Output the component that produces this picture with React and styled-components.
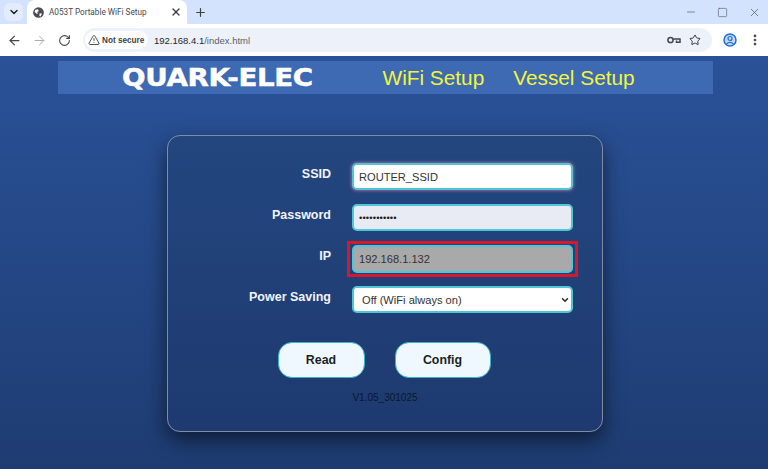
import styled, { createGlobalStyle } from "styled-components"
import { ArrowLeft, ArrowRight, RotateCw, Plus, X, ChevronDown, Minus, Square, Star, TriangleAlert, EllipsisVertical } from "lucide-react"

const GlobalStyle = createGlobalStyle`
    html, body {
        margin: 0;
        padding: 0;
        height: 469px;
        overflow: hidden;
        font-family: "Liberation Sans", Arial, sans-serif;
    }
`

const App = () => {
    return (
        <Page>
            <GlobalStyle />
            <TabStrip>
                <TabMenu><ChevronDown size={12} strokeWidth={3} /></TabMenu>
                <Tab>
                    <svg width="11" height="11" viewBox="0 0 14 14">
                        <circle cx="7" cy="7" r="6.8" fill="#4a4d52" />
                        <path d="M3 3.5 L6 3 L7.5 5 L5.5 6.5 L6 8.5 L4.5 8.5 L2 6 Z M8.5 8 L11.5 8.5 L9.5 12 L8 11 Z" fill="#fff" />
                    </svg>
                    <TabTitle>A053T Portable WiFi Setup</TabTitle>
                    <X size={12} strokeWidth={2.6} color="#33373c" />
                </Tab>
                <NewTab><Plus size={13} strokeWidth={2.2} /></NewTab>
                <WindowControls>
                    <Minus size={12} strokeWidth={1.4} />
                    <Square size={11} strokeWidth={1.4} />
                    <X size={13} strokeWidth={1.4} />
                </WindowControls>
            </TabStrip>
            <Toolbar>
                <NavIcon><ArrowLeft size={15} /></NavIcon>
                <NavIcon $dim><ArrowRight size={15} strokeWidth={1.5} /></NavIcon>
                <NavIcon><RotateCw size={13} /></NavIcon>
                <Omnibox>
                    <SecurityChip>
                        <TriangleAlert size={12} strokeWidth={1.8} />
                        Not secure
                    </SecurityChip>
                    <Url>192.168.4.1<span>/index.html</span></Url>
                    <OmniIcons>
                        <svg width="14" height="10" viewBox="0 0 14 10" fill="none" stroke="#44484d" strokeWidth="1.5">
                            <circle cx="3.5" cy="5" r="2.6" />
                            <path d="M6.2 4H13V7.2H9.5V5.5" />
                        </svg>
                        <Star size={12} strokeWidth={2} color="#33373c" />
                    </OmniIcons>
                </Omnibox>
                <ProfileIcon>
                    <svg width="14" height="14" viewBox="0 0 14 14">
                        <circle cx="7" cy="7" r="6" fill="#c2d7f8" stroke="#1f6fd8" strokeWidth="1.5" />
                        <circle cx="7" cy="5.5" r="2" fill="none" stroke="#1f6fd8" strokeWidth="1.2" />
                        <path d="M3.6 11 Q7 7.8 10.4 11" fill="none" stroke="#1f6fd8" strokeWidth="1.2" />
                    </svg>
                </ProfileIcon>
                <MenuIcon><EllipsisVertical size={14} strokeWidth={2.6} /></MenuIcon>
            </Toolbar>
            <Content>
                <Header>
                    <Logo>QUARK-ELEC</Logo>
                    <HeaderLink $first>WiFi Setup</HeaderLink>
                    <HeaderLink>Vessel Setup</HeaderLink>
                </Header>
                <Card>
                    <Row>
                        <Label>SSID</Label>
                        <Field $bg="#ffffff" $glow>ROUTER_SSID</Field>
                    </Row>
                    <Row>
                        <Label>Password</Label>
                        <Field $bg="#e8ebf3"><Dots>•••••••••••</Dots></Field>
                    </Row>
                    <Row>
                        <Label>IP</Label>
                        <Highlight>
                            <Field $bg="#a9a9a9">192.168.1.132</Field>
                        </Highlight>
                    </Row>
                    <Row>
                        <Label>Power Saving</Label>
                        <Field $bg="#ffffff" $select>
                            Off (WiFi always on)
                            <ChevronDown size={10} strokeWidth={3.4} />
                        </Field>
                    </Row>
                    <Buttons>
                        <Button $w={87}>Read</Button>
                        <Button $w={96}>Config</Button>
                    </Buttons>
                    <Version>V1.05_301025</Version>
                </Card>
            </Content>
        </Page>
    )
}

const Page = styled.div`
    width: 768px;
    height: 469px;
    display: flex;
    flex-direction: column;
    overflow: hidden;
`
const TabStrip = styled.div`
    height: 24px;
    background-color: #d3e3fd;
    display: flex;
    align-items: center;
    padding-left: 4px;
    color: #3c4043;
`
const TabMenu = styled.div`
    width: 19px;
    height: 18px;
    border-radius: 6px;
    background-color: #e3ecfc;
    display: flex;
    align-items: center;
    justify-content: center;
    margin-right: 4px;
    color: #1f2328;
`
const Tab = styled.div`
    width: 160px;
    height: 24px;
    box-sizing: border-box;
    background-color: #fff;
    border-radius: 8px 8px 0 0;
    display: flex;
    align-items: center;
    padding: 0 5px 0 6px;
    gap: 5px;
`
const TabTitle = styled.span`
    flex: 1;
    font-family: Roboto, sans-serif;
    font-size: 8.2px;
    color: #45484d;
    white-space: nowrap;
`
const NewTab = styled.div`
    display: flex;
    margin-left: 7px;
    color: #3c4043;
`
const WindowControls = styled.div`
    margin-left: auto;
    padding-right: 7px;
    display: flex;
    gap: 20px;
    align-items: center;
    color: #5a6068;
`
const Toolbar = styled.div`
    height: 32px;
    background-color: #fff;
    display: flex;
    align-items: center;
    padding-left: 7px;
    box-sizing: border-box;
`
const NavIcon = styled.div`
    width: 15px;
    margin-right: 10px;
    display: flex;
    justify-content: center;
    color: ${(props) => (props.$dim ? "#a4a8ad" : "#44484d")};
`
const Omnibox = styled.div`
    width: 629px;
    margin-left: 1px;
    height: 24px;
    box-sizing: border-box;
    background-color: #edf2fa;
    border-radius: 12px;
    display: flex;
    align-items: center;
    padding: 0 11px 0 2px;
`
const SecurityChip = styled.div`
    height: 18px;
    width: 63px;
    box-sizing: border-box;
    padding-left: 3px;
    background-color: #fff;
    border-radius: 9px;
    display: flex;
    align-items: center;
    gap: 2px;
    font-size: 8.2px;
    font-weight: 700;
    color: #3d4146;
    white-space: nowrap;
`
const Url = styled.span`
    margin-left: 6px;
    font-size: 9.5px;
    color: #24272b;
    span { color: #5c6066; }
`
const OmniIcons = styled.div`
    margin-left: auto;
    display: flex;
    align-items: center;
    gap: 8px;
`
const ProfileIcon = styled.div`
    display: flex;
    margin-left: 11px;
`
const MenuIcon = styled.div`
    display: flex;
    margin-left: 11px;
    color: #44484d;
`
const Content = styled.div`
    flex: 1;
    background: linear-gradient(#2a5298 0%, #1e3c72 100%);
    display: flex;
    flex-direction: column;
    align-items: center;
    padding-top: 5px;
`
const Header = styled.div`
    width: 655px;
    height: 33px;
    background-color: #3e6ab3;
    display: flex;
    align-items: center;
    margin-left: 2px;
    padding-left: 64px;
    box-sizing: border-box;
`
const Logo = styled.div`
    width: 190px;
    font-family: "DejaVu Sans", sans-serif;
    font-weight: 700;
    font-size: 24.5px;
    letter-spacing: -0.3px;
    color: #fff;
    -webkit-text-stroke: 0.5px #fff;
    white-space: nowrap;
    transform: scaleX(1.13);
    transform-origin: left center;
`
const HeaderLink = styled.div`
    margin-left: ${(props) => (props.$first ? "71px" : "29px")};
    font-size: 20.8px;
    color: #f2f53a;
    white-space: nowrap;
`
const Card = styled.div`
    width: 436px;
    height: 297px;
    box-sizing: border-box;
    margin-top: 41px;
    margin-left: 2px;
    padding-top: 27px;
    border: 1px solid #7f8ca5;
    border-radius: 13px;
    background: linear-gradient(#23467f, #1e3a70);
    box-shadow: 0 8px 20px rgba(0, 0, 0, 0.55);
    display: flex;
    flex-direction: column;
    gap: 14px;
`
const Row = styled.div`
    display: flex;
    align-items: center;
    height: 27px;
`
const Label = styled.div`
    width: 163px;
    flex: none;
    margin-bottom: 5px;
    text-align: right;
    font-size: 12.5px;
    font-weight: 700;
    color: #f1f3f7;
    white-space: nowrap;
`
const Field = styled.div`
    width: 221px;
    height: 27px;
    flex: none;
    margin-left: 21px;
    box-sizing: border-box;
    background-color: ${(props) => props.$bg};
    border: 2px solid #4fc6d6;
    border-radius: 5px;
    padding: 0 1px 0 ${(props) => (props.$select ? "8px" : "5px")};
    font-size: 11.1px;
    color: #333;
    display: flex;
    align-items: center;
    justify-content: space-between;
    box-shadow: ${(props) => (props.$glow ? "0 0 3px 1px rgba(190, 120, 170, 0.7)" : "none")};
    svg { color: #222; }
`
const Highlight = styled.div`
    flex: none;
    margin-left: 16px;
    padding: 1px 2px;
    border: 3px solid #d3182f;
    display: flex;
    ${Field} { margin-left: 0; height: 28px; }
`
const Dots = styled.span`
    font-size: 9.5px;
    letter-spacing: 0.1px;
    color: #222;
`
const Buttons = styled.div`
    display: flex;
    justify-content: center;
    gap: 30px;
    margin-top: 15px;
    padding-right: 2px;
`
const Button = styled.button`
    width: ${(props) => props.$w}px;
    height: 36px;
    border: 1px solid #39b4cc;
    border-radius: 14px;
    background-color: #f0f8ff;
    font-family: "Liberation Sans", sans-serif;
    font-size: 12.4px;
    font-weight: 700;
    color: #1c1f24;
`
const Version = styled.div`
    text-align: center;
    font-size: 10px;
    color: #0a1730;
`

export default App
